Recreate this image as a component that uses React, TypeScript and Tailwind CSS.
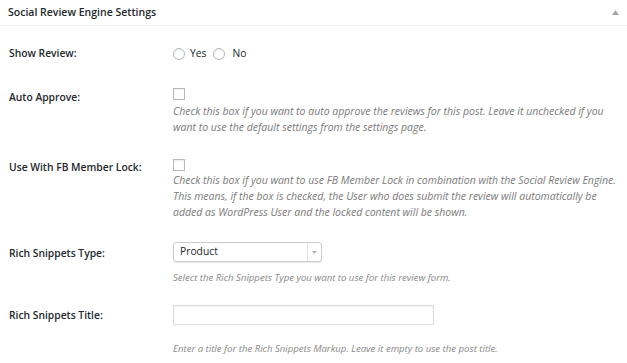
export default function App() {
  const font = { fontFamily: '"Open Sans", "Noto Sans", sans-serif' }
  return (
    <div className="w-[627px] h-[363px] bg-white overflow-hidden text-[#23282d]" style={font}>
      <div className="h-[26px] border-b border-[#eeeeee] flex items-center justify-between pl-[8px] pr-[8px]">
        <h2 className="text-[10.5px] font-semibold leading-none">Social Review Engine Settings</h2>
        <svg width="7" height="5" viewBox="0 0 7 5" className="mb-[1px]">
          <path d="M0 5 L3.5 0 L7 5 Z" fill="#a0a5aa" />
        </svg>
      </div>

      <div className="flex flex-col pl-[9px]">
        {/* Show Review */}
        <div className="flex mt-[20px] h-[16px] items-center">
          <div className="w-[164px] text-[10.3px] font-semibold">Show Review:</div>
          <div className="flex items-center text-[10.3px]">
            <span className="w-[12px] h-[12px] rounded-full border border-[#b4b9be] bg-white shadow-[inset_0_1px_2px_rgba(0,0,0,0.07)]" />
            <span className="ml-[5px]">Yes</span>
            <span className="ml-[7px] w-[12px] h-[12px] rounded-full border border-[#b4b9be] bg-white shadow-[inset_0_1px_2px_rgba(0,0,0,0.07)]" />
            <span className="ml-[7px]">No</span>
          </div>
        </div>

        {/* Auto Approve */}
        <div className="flex mt-[26px]">
          <div className="w-[164px] text-[10.3px] font-semibold leading-[16px] pt-[1px]">Auto Approve:</div>
          <div className="flex flex-col">
            <span className="w-[12px] h-[12px] border border-[#b4b9be] bg-white shadow-[inset_0_1px_2px_rgba(0,0,0,0.07)]" />
            <p className="mt-[3px] text-[10.5px] italic leading-[16px] text-[#7a7a7a] w-[445px]">
              Check this box if you want to auto approve the reviews for this post. Leave it unchecked if you want to use the default settings from the settings page.
            </p>
          </div>
        </div>

        {/* FB Member Lock */}
        <div className="flex mt-[24px]">
          <div className="w-[164px] text-[10.3px] font-semibold leading-[16px]">Use With FB Member Lock:</div>
          <div className="flex flex-col">
            <span className="w-[12px] h-[12px] border border-[#b4b9be] bg-white shadow-[inset_0_1px_2px_rgba(0,0,0,0.07)]" />
            <p className="mt-[1px] text-[10.5px] italic leading-[16px] text-[#7a7a7a] w-[445px]">
              Check this box if you want to use FB Member Lock in combination with the Social Review Engine. This means, if the box is checked, the User who does submit the review will automatically be added as WordPress User and the locked content will be shown.
            </p>
          </div>
        </div>

        {/* Rich Snippets Type */}
        <div className="flex mt-[22px]">
          <div className="w-[164px] text-[10.3px] font-semibold leading-[16px] pt-[3px]">Rich Snippets Type:</div>
          <div className="flex flex-col">
            <div className="w-[149px] h-[20px] border border-[#cccccc] rounded-[3px] bg-white shadow-[0_1px_1px_rgba(0,0,0,0.08)] flex items-center">
              <span className="flex-1 pl-[6px] text-[10.3px]">Product</span>
              <span className="w-[14px] h-full border-l border-[#e2e2e2] flex items-center justify-center">
                <svg width="5" height="3" viewBox="0 0 5 3">
                  <path d="M0 0 L5 0 L2.5 3 Z" fill="#b0b0b0" />
                </svg>
              </span>
            </div>
            <p className="mt-[8px] text-[9.6px] italic leading-[16px] text-[#888888]">
              Select the Rich Snippets Type you want to use for this review form.
            </p>
          </div>
        </div>

        {/* Rich Snippets Title */}
        <div className="flex mt-[19px]">
          <div className="w-[164px] text-[10.3px] font-semibold leading-[16px] pt-[2px]">Rich Snippets Title:</div>
          <div className="flex flex-col">
            <div className="w-[261px] h-[20px] border border-[#dddddd] bg-white shadow-[inset_0_1px_2px_rgba(0,0,0,0.07)]" />
            <p className="mt-[16px] text-[9.6px] italic leading-[16px] text-[#888888]">
              Enter a title for the Rich Snippets Markup. Leave it empty to use the post title.
            </p>
          </div>
        </div>
      </div>
    </div>
  )
}
